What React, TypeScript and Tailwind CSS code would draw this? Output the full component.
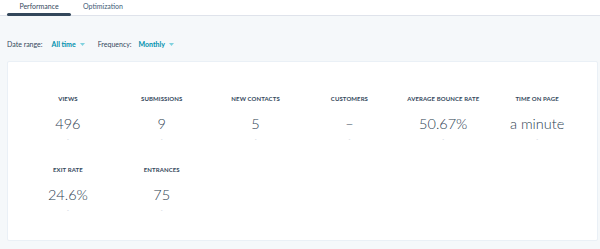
import React from "react";

const Caret = () => (
  <svg width="5" height="3" viewBox="0 0 5 3" className="ml-[4px] inline-block">
    <path d="M0 0 L5 0 L2.5 3 Z" fill="#7fd1de" />
  </svg>
);

const stats1 = [
  { label: "VIEWS", value: "496" },
  { label: "SUBMISSIONS", value: "9" },
  { label: "NEW CONTACTS", value: "5" },
  { label: "CUSTOMERS", value: "–" },
  { label: "AVERAGE BOUNCE RATE", value: "50.67%" },
  { label: "TIME ON PAGE", value: "a minute" },
];
const stats2 = [
  { label: "EXIT RATE", value: "24.6%" },
  { label: "ENTRANCES", value: "75" },
];

const Stat = ({ label, value }: { label: string; value: string }) => (
  <div className="flex flex-col items-center">
    <div className="h-[8px] text-[6px] leading-[8px] font-bold tracking-[0.1px] text-[#33475b]">
      {label}
    </div>
    <div className="mt-[11px] h-[20px] text-[14.5px] leading-[20px] font-light text-[#2d3e50]">
      {value}
    </div>
    <div className="mt-[2px] h-[6px] text-[5px] leading-[6px] text-[#b8c4d0]">-</div>
  </div>
);

export default function App() {
  return (
    <div
      className="w-[600px] h-[249px] bg-[#f5f8fa] overflow-hidden"
      style={{ fontFamily: "Lato, 'Liberation Sans', sans-serif" }}
    >
      <div className="h-[16px] bg-white border-b border-[#dfe3eb] flex items-stretch">
        <div className="ml-[7px] w-[64px] relative flex justify-center items-start pt-[2px] text-[7px] leading-[9px] text-[#33475b]">
          Performance
          <div className="absolute left-0 right-0 bottom-[-1px] h-[3px] rounded-full bg-[#33475b]" />
        </div>
        <div className="w-[64px] flex justify-center items-start pt-[2px] text-[7px] leading-[9px] text-[#425b76]">
          Optimization
        </div>
      </div>
      <div className="pt-[23px] pl-[7px] h-[45px] flex items-start text-[7px] leading-[10px]">
        <span className="text-[#33475b]">Date range:</span>
        <span className="ml-[9px] font-bold text-[#0091ae] flex items-center">
          All time
          <Caret />
        </span>
        <span className="ml-[13px] text-[#33475b]">Frequency:</span>
        <span className="ml-[7px] font-bold text-[#0091ae] flex items-center">
          Monthly
          <Caret />
        </span>
      </div>
      <div className="ml-[7px] w-[591px] h-[180px] bg-white border border-[#eaf0f6] rounded-[2px] px-[13px] pt-[33px]">
        <div className="grid grid-cols-6">
          {stats1.map((s) => (
            <Stat key={s.label} {...s} />
          ))}
        </div>
        <div className="grid grid-cols-6 mt-[24px]">
          {stats2.map((s) => (
            <Stat key={s.label} {...s} />
          ))}
        </div>
      </div>
    </div>
  );
}
